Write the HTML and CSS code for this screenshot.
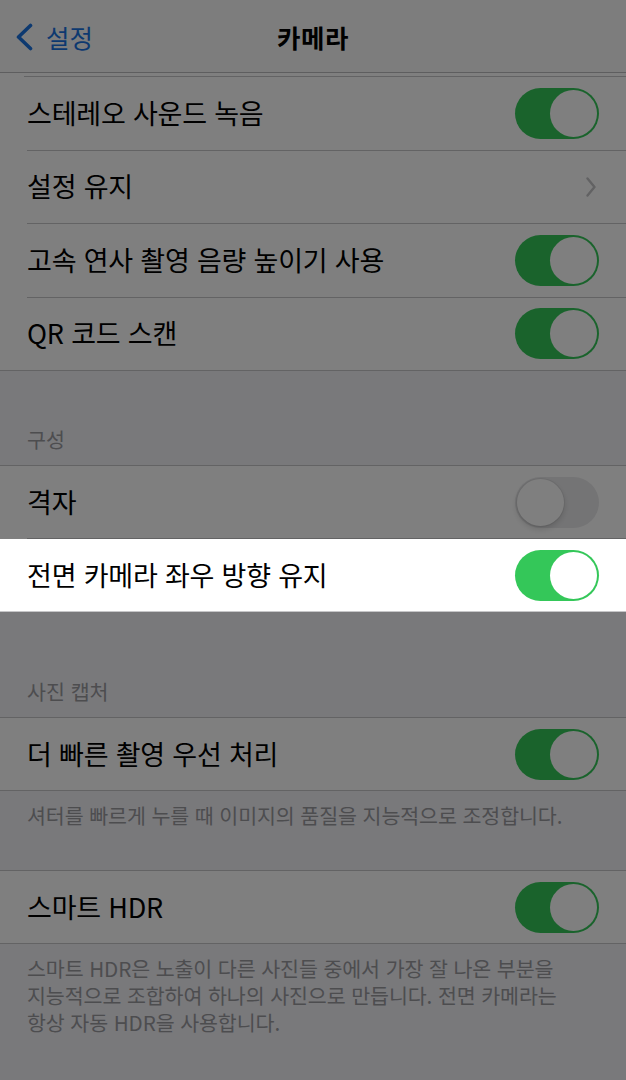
FILE: index.html
```html
<!DOCTYPE html>
<html lang="ko">
<head>
<meta charset="utf-8">
<title>카메라</title>
<link rel="stylesheet" href="styles.css">
</head>
<body>
<div class="screen">
  <header class="nav">
    <a class="back" href="#">
      <svg class="back-icon" width="18" height="28" viewBox="0 0 18 28" aria-hidden="true">
        <polyline points="15.5,2.5 3.5,14 15.5,25.5" fill="none" stroke="currentColor" stroke-width="3.6" stroke-linecap="round" stroke-linejoin="round"/>
      </svg>
      <span>설정</span>
    </a>
    <h1 class="nav-title">카메라</h1>
  </header>

  <main class="content">
    <div class="peek"><div class="peek-inner"></div></div>

    <ul class="group group-first">
      <li class="row"><div class="row-inner"><span class="label">스테레오 사운드 녹음</span><span class="switch on"></span></div></li>
      <li class="row"><div class="row-inner"><span class="label">설정 유지</span>
        <svg class="chevron" width="10" height="20" viewBox="0 0 10 20" aria-hidden="true"><polyline points="1.5,1.5 8.5,10 1.5,18.5" fill="none" stroke="currentColor" stroke-width="2.4" stroke-linecap="round" stroke-linejoin="round"/></svg>
      </div></li>
      <li class="row"><div class="row-inner"><span class="label">고속 연사 촬영 음량 높이기 사용</span><span class="switch on"></span></div></li>
      <li class="row"><div class="row-inner"><span class="label">QR 코드 스캔</span><span class="switch on"></span></div></li>
    </ul>

    <h2 class="section-header header-compose">구성</h2>
    <ul class="group">
      <li class="row"><div class="row-inner"><span class="label">격자</span><span class="switch"></span></div></li>
      <li class="row is-focused"><div class="row-inner"><span class="label">전면 카메라 좌우 방향 유지</span><span class="switch on"></span></div></li>
    </ul>

    <h2 class="section-header header-capture">사진 캡처</h2>
    <ul class="group">
      <li class="row"><div class="row-inner"><span class="label">더 빠른 촬영 우선 처리</span><span class="switch on"></span></div></li>
    </ul>
    <p class="section-footer">셔터를 빠르게 누를 때 이미지의 품질을 지능적으로 조정합니다.</p>

    <ul class="group group-hdr">
      <li class="row"><div class="row-inner"><span class="label">스마트 HDR</span><span class="switch on"></span></div></li>
    </ul>
    <p class="section-footer">스마트 HDR은 노출이 다른 사진들 중에서 가장 잘 나온 부분을<br>지능적으로 조합하여 하나의 사진으로 만듭니다. 전면 카메라는<br>항상 자동 HDR을 사용합니다.</p>
  </main>

  <div class="dim"></div>
</div>
</body>
</html>
```

FILE: styles.css
```css
* {
  box-sizing: border-box;
}

html,
body {
  margin: 0;
  padding: 0;
  background: #f2f2f7;
}

body {
  font-family: "Noto Sans CJK KR", "Noto Sans", sans-serif;
  color: #000;
}

.screen {
  position: relative;
  width: 626px;
  height: 1080px;
  overflow: hidden;
  background: #f2f2f7;
}

/* navigation bar */
.nav {
  position: relative;
  height: 73px;
  background: #fbfbfb;
  border-bottom: 1px solid #bdbdbf;
  display: flex;
  align-items: center;
  justify-content: center;
}

.back {
  position: absolute;
  left: 15px;
  top: 0;
  height: 72px;
  display: flex;
  align-items: center;
  gap: 13px;
  color: #1a73e0;
  text-decoration: none;
  font-size: 25.5px;
}

.back-icon {
  display: block;
  margin-top: 1px;
}

.nav-title {
  margin: 0;
  font-size: 25.5px;
  font-weight: 700;
  letter-spacing: 0.5px;
}

/* list groups */
.content {
  display: flex;
  flex-direction: column;
}

.peek {
  height: 4px;
  background: #fff;
  padding-left: 24px;
}

.peek-inner {
  height: 4px;
  border-bottom: 1px solid #c6c6c8;
}

.group {
  list-style: none;
  margin: 0;
  padding: 0;
  background: #fff;
  border-top: 1px solid #c6c6c8;
}

.group-first {
  border-top: none;
}

.group-first .row {
  height: 73.5px;
}

.row {
  height: 73px;
  padding-left: 27px;
  background: #fff;
}

.row-inner {
  height: 100%;
  display: flex;
  align-items: center;
  justify-content: space-between;
  padding-right: 27px;
  border-bottom: 1px solid #c6c6c8;
}

.row:last-child {
  border-bottom: 1px solid #c6c6c8;
}

.row:last-child .row-inner {
  border-bottom: none;
}

.label {
  font-size: 27px;
  line-height: 1;
  letter-spacing: -0.2px;
  padding-bottom: 2px;
}

.chevron {
  display: block;
  color: #c4c4c7;
  margin-right: 3px;
}

/* switch */
.switch {
  position: relative;
  flex: none;
  width: 84px;
  height: 51px;
  border-radius: 26px;
  background: #e9e9eb;
}

.switch::after {
  content: "";
  position: absolute;
  top: 2px;
  left: 2px;
  width: 47px;
  height: 47px;
  border-radius: 50%;
  background: #fff;
  box-shadow: 0 3px 6px rgba(0, 0, 0, 0.16), 0 0 0 1px rgba(0, 0, 0, 0.05);
}

.switch.on {
  background: #34c759;
}

.switch.on::after {
  left: 35px;
  box-shadow: none;
}

/* section header and footer text */
.section-header {
  margin: 0;
  padding: 0 27px;
  font-size: 20.6px;
  font-weight: 400;
  line-height: 27px;
  color: #9a9a9f;
}

.header-compose {
  padding-top: 55px;
  padding-bottom: 12px;
}

.header-capture {
  padding-top: 66px;
  padding-bottom: 12px;
}

.section-footer {
  margin: 0;
  padding: 11px 27px 0;
  font-size: 20.6px;
  line-height: 27px;
  color: #9a9a9f;
  letter-spacing: -0.1px;
}

.group-hdr {
  margin-top: 41px;
}

/* dimming layer over the page, with the focused row lifted above it */
.dim {
  position: absolute;
  inset: 0;
  z-index: 1;
  background: rgba(0, 0, 0, 0.5);
}

.row.is-focused {
  position: relative;
  z-index: 2;
}
```
